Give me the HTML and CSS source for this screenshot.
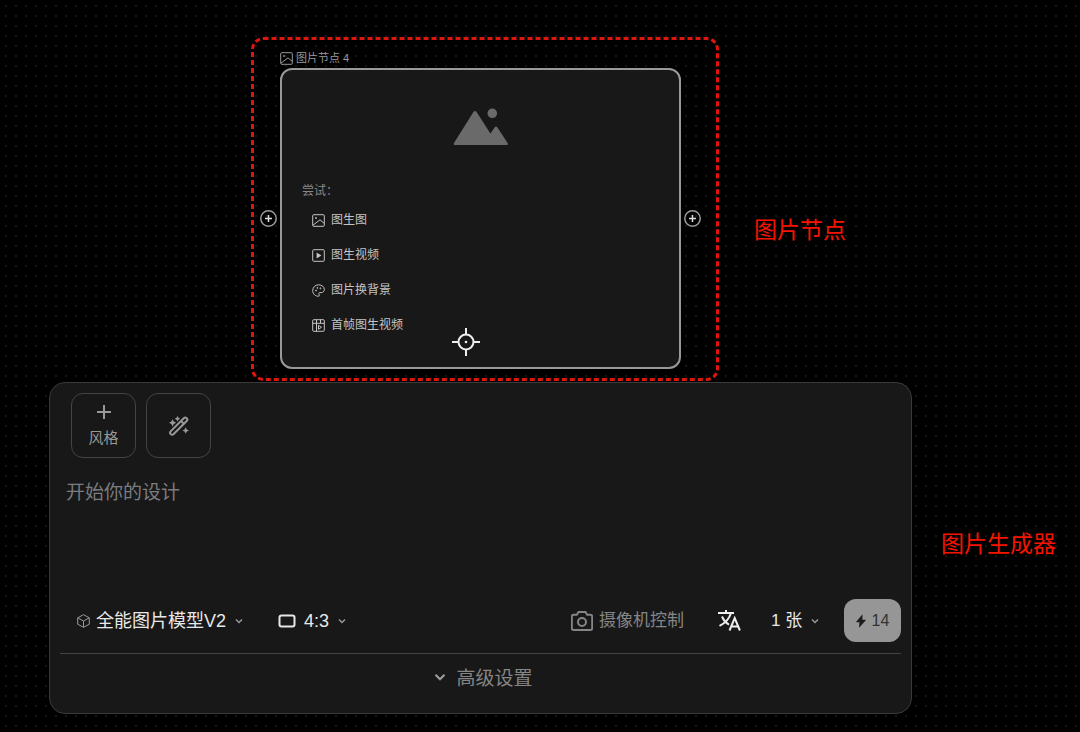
FILE: index.html
```
<!DOCTYPE html>
<html lang="zh-CN">
<head>
    <meta charset="UTF-8">
    <meta name="viewport" content="width=device-width, initial-scale=1.0">
    <title>图片节点</title>
    <link rel="stylesheet" href="styles.css">
</head>
<body>
    <!-- shared icons -->
    <svg class="sprite" aria-hidden="true">
        <symbol id="icon-image" viewBox="0 0 13 13">
            <rect x="0.7" y="0.7" width="11.6" height="11.6" rx="1"/>
            <circle cx="4" cy="4" r="0.6"/>
            <path d="M1 11.2 8 5.8l4.2 3.6"/>
        </symbol>
        <symbol id="icon-chevron" viewBox="0 0 8 8">
            <path d="M1 2.5 4 5.5l3-3"/>
        </symbol>
        <symbol id="icon-handle" viewBox="0 0 17 17">
            <circle cx="8.5" cy="8.5" r="7.7"/>
            <path class="handle-plus" d="M8.5 5v7M5 8.5h7"/>
        </symbol>
    </svg>

    <main class="canvas">
        <section class="node-row">
            <div class="node-frame">
                <svg class="frame-outline" aria-hidden="true"><rect x="1.5" y="1.5" rx="11"/></svg>
                <h2 class="node-title">
                    <svg width="13" height="13"><use href="#icon-image"/></svg>
                    图片节点 4
                </h2>
                <button class="handle" aria-label="添加输入"><svg width="17" height="17"><use href="#icon-handle"/></svg></button>
                <div class="node-card">
                    <svg class="placeholder" width="56" height="38" viewBox="0 0 56 38" aria-hidden="true">
                        <path d="M2.2 37Q0 37 1 35L20.4 4Q22 2 23.6 4L37.4 25.6 41.6 19.4Q43 17.6 44.4 19.4L54.6 35Q55.6 37 53.6 37Z"/>
                        <circle cx="39.3" cy="5.3" r="4.8"/>
                    </svg>
                    <p class="try">尝试：</p>
                    <ul class="actions">
                        <li>
                            <button>
                                <svg width="13" height="13"><use href="#icon-image"/></svg>
                                图生图
                            </button>
                        </li>
                        <li>
                            <button>
                                <svg width="13" height="13" viewBox="0 0 13 13">
                                    <rect x="0.7" y="0.7" width="11.6" height="11.6" rx="1"/>
                                    <path class="solid" d="M4.6 3.6v5.8l4.8-2.9z"/>
                                </svg>
                                图生视频
                            </button>
                        </li>
                        <li>
                            <button>
                                <svg width="13" height="13" viewBox="0 0 13 13">
                                    <path d="M6.8 12.2C3.3 12.4.7 9.9.7 6.6.7 3.3 3.3.8 6.6.8c3.2 0 5.7 2 5.7 4.7 0 1.9-1.3 3.1-3.1 3.1H8c-1 0-1.6.8-1.1 1.6.6 1 .7 1.9-.1 2z"/>
                                    <circle cx="4" cy="6.5" r="0.5"/>
                                    <circle cx="5.4" cy="3.9" r="0.5"/>
                                    <circle cx="8.5" cy="4.3" r="0.5"/>
                                </svg>
                                图片换背景
                            </button>
                        </li>
                        <li>
                            <button>
                                <svg width="13" height="13" viewBox="0 0 13 13">
                                    <rect x="0.7" y="0.7" width="11.6" height="11.6" rx="1"/>
                                    <path d="M.7 4.3h11.6M4.5.7v11.6M8.5.7v3.6"/>
                                    <path d="M6.5 6.3v4l3-2z"/>
                                </svg>
                                首帧图生视频
                            </button>
                        </li>
                    </ul>
                    <svg class="crosshair" width="28" height="28" viewBox="0 0 28 28" aria-hidden="true">
                        <circle cx="14" cy="14" r="7.5"/>
                        <path d="M14 0v7M14 21v7M0 14h7M21 14h7"/>
                        <circle class="solid" cx="14" cy="14" r="1.3"/>
                    </svg>
                </div>
                <button class="handle" aria-label="添加输出"><svg width="17" height="17"><use href="#icon-handle"/></svg></button>
            </div>
            <p class="note node-note">图片节点</p>
        </section>

        <section class="composer-row">
            <form class="composer">
                <div class="tools">
                    <button type="button" class="tool">
                        <svg width="16" height="16" viewBox="0 0 16 16"><path d="M8 1v14M1 8h14"/></svg>
                        风格
                    </button>
                    <button type="button" class="tool" aria-label="魔法棒">
                        <svg width="20" height="20" viewBox="0 0 20 20">
                            <path d="M1.6 15.4 15 2c1.7-1.5 4.4 1 2.9 2.8L4.4 18.3c-1.8 1.5-4.4-1-2.8-2.9zM12 5l2.8 2.8"/>
                            <path class="solid" d="m3.6 3.2 1.2 2.4 2.4 1.2L4.800 8 3.600 10.400 2.400 8 0 6.800l2.400-1.200zM8.500 0l1 1.700 1.700 1-1.700 1-1 1.700-1-1.700-1.700-1 1.700-1zM16.700 11.200l1.100 2.200 2.200 1.100-2.200 1.100-1.100 2.200-1.100-2.200-2.200-1.100 2.200-1.100z"/>
                        </svg>
                    </button>
                </div>
                <textarea class="prompt" placeholder="开始你的设计" aria-label="设计描述"></textarea>
                <div class="toolbar">
                    <label class="picker">
                        <svg class="cube" width="13" height="14" viewBox="0 0 13 14">
                            <path d="M6.5.7 12.3 3.8v6.4L6.5 13.3.7 10.2V3.8zM.9 3.9 6.5 7l5.6-3.1M6.5 7v6"/>
                        </svg>
                        <select aria-label="模型"><option>全能图片模型V2</option></select>
                        <svg class="chevron" width="8" height="8"><use href="#icon-chevron"/></svg>
                    </label>
                    <label class="picker ratio">
                        <svg class="ratio-icon" width="18" height="14" viewBox="0 0 18 14"><rect x="1.5" y="1.5" width="15" height="11" rx="2"/></svg>
                        <select aria-label="比例"><option>4:3</option><option>1:1</option></select>
                        <svg class="chevron" width="8" height="8"><use href="#icon-chevron"/></svg>
                    </label>
                    <button type="button" class="camera">
                        <svg width="22" height="20" viewBox="0 0 22 20">
                            <path d="M2.5 3.8h3.3L7.6.9h6.8l1.8 2.9h3.3a1.7 1.7 0 0 1 1.7 1.7v11.8a1.7 1.7 0 0 1-1.7 1.7h-17A1.7 1.7 0 0 1 .8 17.3V5.5a1.7 1.7 0 0 1 1.7-1.7z"/>
                            <circle cx="11" cy="11" r="4"/>
                        </svg>
                        摄像机控制
                    </button>
                    <button type="button" class="translate" aria-label="翻译">
                        <svg width="23" height="21" viewBox="0 0 23 21">
                            <path d="M0 3h16M8 0v3M13 3C11.5 8 7.5 13 1.5 15.8M4 6.5c1.5 3.5 4 6.5 7 8.2M11.5 20.5 16.7 8l5.2 12.5M13.3 16.5h6.8"/>
                        </svg>
                    </button>
                    <label class="picker count">
                        <select aria-label="数量"><option>1 张</option><option>2 张</option></select>
                        <svg class="chevron" width="8" height="8"><use href="#icon-chevron"/></svg>
                    </label>
                    <button class="submit">
                        <svg width="10" height="14" viewBox="0 0 10 14"><path d="M6.5.3.4 7.4c-.3.5-.1.9.4.9h2.6l-.3 5.4L9.6 6.6c.3-.5.1-.9-.4-.9H6.4z"/></svg>
                        14
                    </button>
                </div>
                <button type="button" class="advanced">
                    <svg class="chevron" width="12" height="12"><use href="#icon-chevron"/></svg>
                    高级设置
                </button>
            </form>
            <p class="note composer-note">图片生成器</p>
        </section>
    </main>
</body>
</html>
```
FILE: styles.css
```
* {
    box-sizing: border-box;
}
body {
    margin: 0;
    min-height: 100vh;
    background-color: #000;
    background-image: radial-gradient(circle at 6px 6px, #161616 1px, transparent 1px);
    background-size: 10px 10px;
    color: #ccc;
    font-family: "Liberation Sans", "Noto Sans CJK SC", sans-serif;
}
button, select, textarea {
    margin: 0;
    padding: 0;
    border: none;
    background: none;
    color: inherit;
    font: inherit;
}
button, select {
    cursor: pointer;
}
h2, p, ul {
    margin: 0;
    padding: 0;
}
svg {
    flex: none;
    display: block;
    fill: none;
    stroke: currentColor;
}
.sprite {
    position: absolute;
    width: 0;
    height: 0;
}
.solid {
    fill: currentColor;
    stroke: none;
}
.canvas {
    display: flex;
    flex-direction: column;
    gap: 1px;
    padding: 37px 24px 18px 49px;
}
.note {
    flex: none;
    color: #f51400;
    font-size: 23px;
    line-height: 32px;
}

/* image node */
.node-row {
    display: flex;
    align-items: center;
    gap: 35px;
    padding-left: 202px;
}
.node-note {
    padding-top: 42px;
}
.node-frame {
    position: relative;
    flex: 0 1 468px;
    display: grid;
    grid-template-columns: 17px 1fr 17px;
    column-gap: 3px;
    row-gap: 2px;
    align-items: center;
    padding: 13px 18px 12px 9px;
}
.frame-outline {
    position: absolute;
    inset: 0;
    width: 100%;
    height: 100%;
    pointer-events: none;
}
.frame-outline rect {
    width: calc(100% - 3px);
    height: calc(100% - 3px);
    stroke: #e0160c;
    stroke-width: 3px;
    stroke-dasharray: 5 3;
}
.node-title {
    grid-column: 2 / 4;
    display: flex;
    align-items: center;
    gap: 3px;
    color: #999;
    font-size: 11px;
    font-weight: normal;
    line-height: 16px;
}
.handle {
    grid-column: 1;
    color: #999;
}
.handle:last-child {
    grid-column: 3;
}
.handle svg {
    stroke-width: 1.5px;
}
.handle-plus {
    stroke: #ddd;
}
.node-card {
    position: relative;
    padding: 38px 20px 32px;
    border: 2px solid #999;
    border-radius: 12px;
    background-color: #181818;
    font-size: 12px;
    line-height: 19px;
}
.placeholder {
    margin: 0 auto 36px;
    fill: #6a6a6a;
    stroke: none;
}
.try {
    color: #888;
}
.actions {
    display: grid;
    gap: 16px;
    padding: 10px 0 0 10px;
    list-style: none;
}
.actions button {
    display: flex;
    align-items: center;
    gap: 6px;
    color: #c4c4c4;
}
.crosshair {
    position: absolute;
    left: 170px;
    bottom: 11px;
    color: #eee;
    stroke-width: 2px;
}

/* generator */
.composer-row {
    display: flex;
    align-items: center;
    gap: 29px;
}
.composer-note {
    padding-bottom: 8px;
}
.composer {
    flex: 1;
    min-width: 0;
    display: flex;
    flex-direction: column;
    padding: 10px 10px 14px;
    border: 1px solid #3a3a3a;
    border-radius: 16px;
    background-color: #181818;
}
.tools {
    display: flex;
    gap: 10px;
    padding: 0 11px;
}
.tool {
    display: flex;
    flex-direction: column;
    align-items: center;
    justify-content: center;
    gap: 8px;
    width: 65px;
    height: 65px;
    border: 1px solid #444;
    border-radius: 12px;
    color: #999;
    font-size: 15px;
    line-height: 20px;
}
.tool svg {
    stroke-width: 2px;
}
.prompt {
    height: 118px;
    margin: 23px 6px 0;
    outline: none;
    resize: none;
    font-size: 19px;
    line-height: 24px;
}
.prompt::placeholder {
    color: #7a7c7f;
}
.toolbar {
    display: flex;
    align-items: center;
    padding: 0 0 11px 17px;
    border-bottom: 1px solid #444;
    font-size: 18px;
    line-height: 24px;
}
.picker {
    display: flex;
    align-items: center;
    gap: 8px;
    color: #e8e8e8;
}
.picker select {
    appearance: none;
    outline: none;
}
.picker option {
    background-color: #181818;
}
.chevron {
    color: #999;
    stroke-width: 1.5px;
}
.cube {
    margin-right: -2px;
    color: #999;
}
.ratio {
    margin-left: 35px;
}
.ratio-icon {
    stroke-width: 2px;
}
.count {
    font-size: 17px;
}
.camera {
    display: flex;
    align-items: center;
    gap: 6px;
    margin-left: auto;
    color: #858585;
    font-size: 17px;
}
.camera svg {
    stroke-width: 2px;
}
.translate {
    margin: 0 30px 0 34px;
    color: #eee;
}
.translate svg {
    stroke-width: 2px;
}
.submit {
    display: flex;
    align-items: center;
    justify-content: center;
    gap: 6px;
    width: 57px;
    height: 43px;
    margin-left: 25px;
    border-radius: 12px;
    background-color: #969696;
    color: #333;
    font-size: 16px;
}
.submit svg {
    fill: #1c1c1c;
    stroke: none;
}
.advanced {
    display: flex;
    align-items: center;
    justify-content: center;
    gap: 10px;
    height: 45px;
    padding-left: 6px;
    color: #858585;
    font-size: 19px;
}
```
